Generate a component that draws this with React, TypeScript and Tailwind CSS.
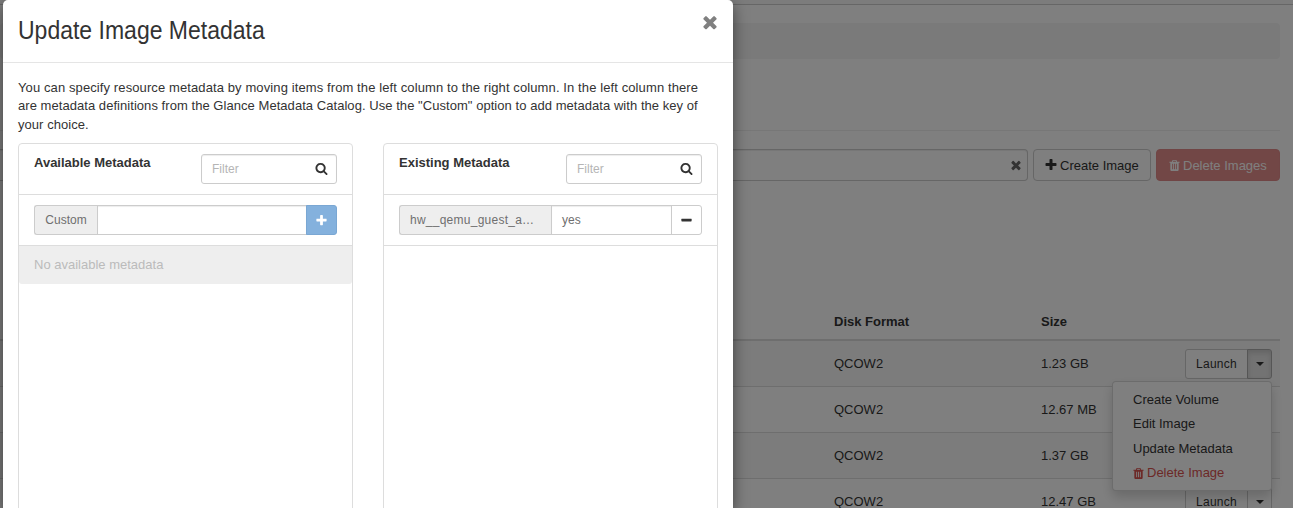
import React from "react";

const PATHS = {
  times: "M1490 1322q0 40-28 68l-136 136q-28 28-68 28t-68-28l-294-294-294 294q-28 28-68 28t-68-28l-136-136q-28-28-28-68t28-68l294-294-294-294q-28-28-28-68t28-68l136-136q28-28 68-28t68 28l294 294 294-294q28-28 68-28t68 28l136 136q28 28 28 68t-28 68l-294 294 294 294q28 28 28 68z",
  plus: "M1600 736v192q0 40-28 68t-68 28h-416v416q0 40-28 68t-68 28h-192q-40 0-68-28t-28-68v-416h-416q-40 0-68-28t-28-68v-192q0-40 28-68t68-28h416v-416q0-40 28-68t68-28h192q40 0 68 28t28 68v416h416q40 0 68 28t28 68z",
  minus: "M1600 736v192q0 40-28 68t-68 28h-1216q-40 0-68-28t-28-68v-192q0-40 28-68t68-28h1216q40 0 68 28t28 68z",
  search: "M1216 832q0-185-131.5-316.5t-316.5-131.5-316.5 131.5-131.5 316.5 131.5 316.5 316.5 131.5 316.5-131.5 131.5-316.5zm512 832q0 52-38 90t-90 38q-54 0-90-38l-343-342q-179 124-399 124-143 0-273.5-55.5t-225-150-150-225-55.5-273.5 55.5-273.5 150-225 225-150 273.5-55.5 273.5 55.5 225 150 150 225 55.5 273.5q0 220-124 399l343 343q37 37 37 90z",
  trash: "M704 1376v-704q0-14-9-23t-23-9h-64q-14 0-23 9t-9 23v704q0 14 9 23t23 9h64q14 0 23-9t9-23zm256 0v-704q0-14-9-23t-23-9h-64q-14 0-23 9t-9 23v704q0 14 9 23t23 9h64q14 0 23-9t9-23zm256 0v-704q0-14-9-23t-23-9h-64q-14 0-23 9t-9 23v704q0 14 9 23t23 9h64q14 0 23-9t9-23zm-544-992h448l-48-117q-7-9-17-11h-317q-10 2-17 11zm928 32v64q0 14-9 23t-23 9h-96v948q0 83-47 143.5t-113 60.5h-832q-66 0-113-58.5t-47-141.5v-952h-96q-14 0-23-9t-9-23v-64q0-14 9-23t23-9h309l70-167q15-37 54-63t79-26h320q40 0 79 26t54 63l70 167h309q14 0 23 9t9 23z",
};

function Icon({ name, className }: { name: keyof typeof PATHS; className: string }) {
  return (
    <svg viewBox="0 0 1792 1792" fill="currentColor" className={`shrink-0 ${className}`} aria-hidden="true">
      <path d={PATHS[name]} />
    </svg>
  );
}

function Caret() {
  return (
    <svg viewBox="0 0 8 4" className="h-1 w-2" fill="currentColor" aria-hidden="true">
      <path d="M0 0h8L4 4z" />
    </svg>
  );
}

// The open menu of the first row covers the labels of the two rows under it.
const rows = [
  { size: "1.23 GB", action: "Launch" },
  { size: "12.67 MB", action: "" },
  { size: "1.37 GB", action: "" },
  { size: "12.47 GB", action: "Launch" },
];

function ActionButton({ label, open }: { label: string; open: boolean }) {
  return (
    <div className="flex h-[30px] w-[87px] text-xs">
      <button className="w-[63px] rounded-l-[3px] border border-[#ccc] bg-white tracking-[0.25px]">{label}</button>
      <button
        className={`-ml-px flex w-[25px] items-center justify-center rounded-r-[3px] border ${
          open ? "border-[#adadad] bg-[#e6e6e6] shadow-[inset_0_3px_5px_rgba(0,0,0,0.125)]" : "border-[#ccc] bg-white"
        }`}
      >
        <Caret />
      </button>
    </div>
  );
}

function ImagesPage() {
  return (
    <div className="h-[508px] w-[1293px] overflow-hidden bg-white">
      <div className="h-[5px] border-b border-[#ccc] bg-[#f8f8f8]" />
      <div className="w-[1280px] pt-[18px]">
        <div className="h-9 rounded-[4px] bg-[#f5f5f5]" />
        <div className="h-[72px] border-b border-[#eee]" />
        <div className="mt-[18px] flex h-8">
          <div className="flex flex-1 items-center justify-end rounded-r-[4px] border border-l-0 border-[#ccc] pr-[4px] shadow-[inset_0_1px_1px_rgba(0,0,0,0.075)]">
            <Icon name="times" className="h-[14px] w-[14px] text-[#666]" />
          </div>
          <button className="ml-[5px] flex w-[118px] items-center rounded-[4px] border border-[#ccc] bg-white pl-[10px]">
            <Icon name="plus" className="mr-[2px] h-[14px] w-[14px]" />
            <span className="pt-[2px]">Create Image</span>
          </button>
          <button className="ml-[5px] flex w-[124px] items-center rounded-[4px] border border-[#e08b8a] bg-[#e48e8c] pl-[11px] text-white">
            <Icon name="trash" className="mr-[2px] h-[13px] w-[13px]" />
            <span className="pt-[2px]">Delete Images</span>
          </button>
        </div>
        <div className="mt-[122px] flex h-[38px] items-center border-b-2 border-[#ddd] pt-[2px] font-bold">
          <div className="w-[834px]" />
          <div className="w-[207px]">Disk Format</div>
          <div>Size</div>
        </div>
        {rows.map(({ size, action }, i) => (
          <div key={size} className={`flex pt-2 leading-[30px] ${i > 0 ? "h-[46px] border-t border-[#ddd]" : "h-[45px]"} ${i % 2 === 0 ? "bg-[#f9f9f9]" : ""}`}>
            <div className="w-[834px]" />
            <div className="w-[207px]">QCOW2</div>
            <div className="w-36">{size}</div>
            <ActionButton label={action} open={i === 0} />
          </div>
        ))}
      </div>
      <div className="absolute left-[1112px] top-[381px] flex h-[110px] w-40 flex-col rounded-[4px] border border-black/15 bg-white pl-5 pt-[6px] leading-6 shadow-[0_6px_12px_rgba(0,0,0,0.175)]">
        <div>Create Volume</div>
        <div>Edit Image</div>
        <div className="pt-px">Update Metadata</div>
        <div className="flex items-center text-[#d9534f]">
          <Icon name="trash" className="-ml-[1px] mr-[2px] h-[13px] w-[13px]" />
          Delete Image
        </div>
      </div>
    </div>
  );
}

function Panel({ title, children }: { title: string; children: React.ReactNode }) {
  return (
    <section className="h-[400px] w-[335px] rounded-[4px] border border-[#ddd]">
      <div className="flex h-[51px] justify-between border-b border-[#ddd] px-[15px] pt-[10px]">
        <h2 className="text-[13px] font-bold leading-[18px]">{title}</h2>
        <div className="flex h-[30px] w-[136px] items-center justify-between rounded-[3px] border border-[#ccc] pl-[10px] pr-2 text-xs text-[#b5b5b5] shadow-[inset_0_1px_1px_rgba(0,0,0,0.075)]">
          <span>Filter</span>
          <Icon name="search" className="-mt-px h-[13px] w-[13px] text-[#333]" />
        </div>
      </div>
      {children}
    </section>
  );
}

function UpdateMetadataDialog() {
  return (
    <div className="absolute left-[3px] top-0 h-[508px] w-[730px] overflow-hidden rounded-t-[5px] bg-white">
      <header className="flex h-[63px] justify-between border-b border-[#e5e5e5] px-[15px]">
        <h1 className="origin-left scale-x-[0.92] whitespace-nowrap pt-[13px] text-[25px] leading-[34px]">Update Image Metadata</h1>
        <Icon name="times" className="-mr-[2px] mt-[12px] h-[20px] w-[20px] text-[#808080]" />
      </header>
      <div className="px-[15px] pt-[16px]">
        <p className="whitespace-nowrap">
          <span className="block h-[18px] leading-[18px] tracking-[0.105px]">
            You can specify resource metadata by moving items from the left column to the right column. In the left column there
          </span>
          <span className="block h-[19px] leading-[18px] tracking-[0.05px]">
            are metadata definitions from the Glance Metadata Catalog. Use the "Custom" option to add metadata with the key of
          </span>
          <span className="block h-[18px] leading-[18px] tracking-[0.05px]">your choice.</span>
        </p>
        <div className="mt-[9px] flex gap-[30px]">
          <Panel title="Available Metadata">
            <div className="h-[51px] border-b border-[#ddd] px-[15px] pt-[10px]">
              <div className="flex h-[30px] text-xs">
                <div className="flex w-[63px] items-center justify-center rounded-l-[3px] border border-r-0 border-[#ccc] bg-[#eee] text-[#6f6f6f]">Custom</div>
                <div className="flex-1 border border-[#ccc] shadow-[inset_0_1px_1px_rgba(0,0,0,0.075)]" />
                <button className="-ml-px flex w-[31px] items-center justify-center rounded-r-[3px] border border-[#7aa7d3] bg-[#84b1dd] text-white">
                  <Icon name="plus" className="h-[13px] w-[13px]" />
                </button>
              </div>
            </div>
            <div className="h-[38px] rounded-b-[3px] bg-[#eee] px-[15px] pt-[10px] leading-[18px] text-[#bbb]">No available metadata</div>
          </Panel>
          <Panel title="Existing Metadata">
            <div className="h-[51px] border-b border-[#ddd] px-[15px] pt-[10px]">
              <div className="flex h-[30px] text-xs text-[#6f6f6f]">
                <div className="flex w-[152px] items-center rounded-l-[3px] border border-r-0 border-[#ccc] bg-[#eee] pl-[10px] tracking-[0.25px]">hw__qemu_guest_a…</div>
                <div className="flex flex-1 items-center border border-[#ccc] pl-[10px] shadow-[inset_0_1px_1px_rgba(0,0,0,0.075)]">yes</div>
                <button className="-ml-px flex w-[31px] items-center justify-center rounded-r-[3px] border border-[#ccc] text-[#333]">
                  <Icon name="minus" className="h-[13px] w-[13px]" />
                </button>
              </div>
            </div>
          </Panel>
        </div>
      </div>
    </div>
  );
}

export default function App() {
  return (
    <main className="relative h-[508px] w-[1293px] overflow-hidden font-['Liberation_Sans',Arial,sans-serif] text-[13px] leading-[18.57px] text-[#333]">
      <ImagesPage />
      <div className="absolute inset-0 bg-black/50" />
      <div className="absolute left-[3px] top-0 h-[508px] w-[730px] rounded-t-[5px] shadow-[0_5px_15px_rgba(0,0,0,0.5)]" />
      <UpdateMetadataDialog />
    </main>
  );
}
